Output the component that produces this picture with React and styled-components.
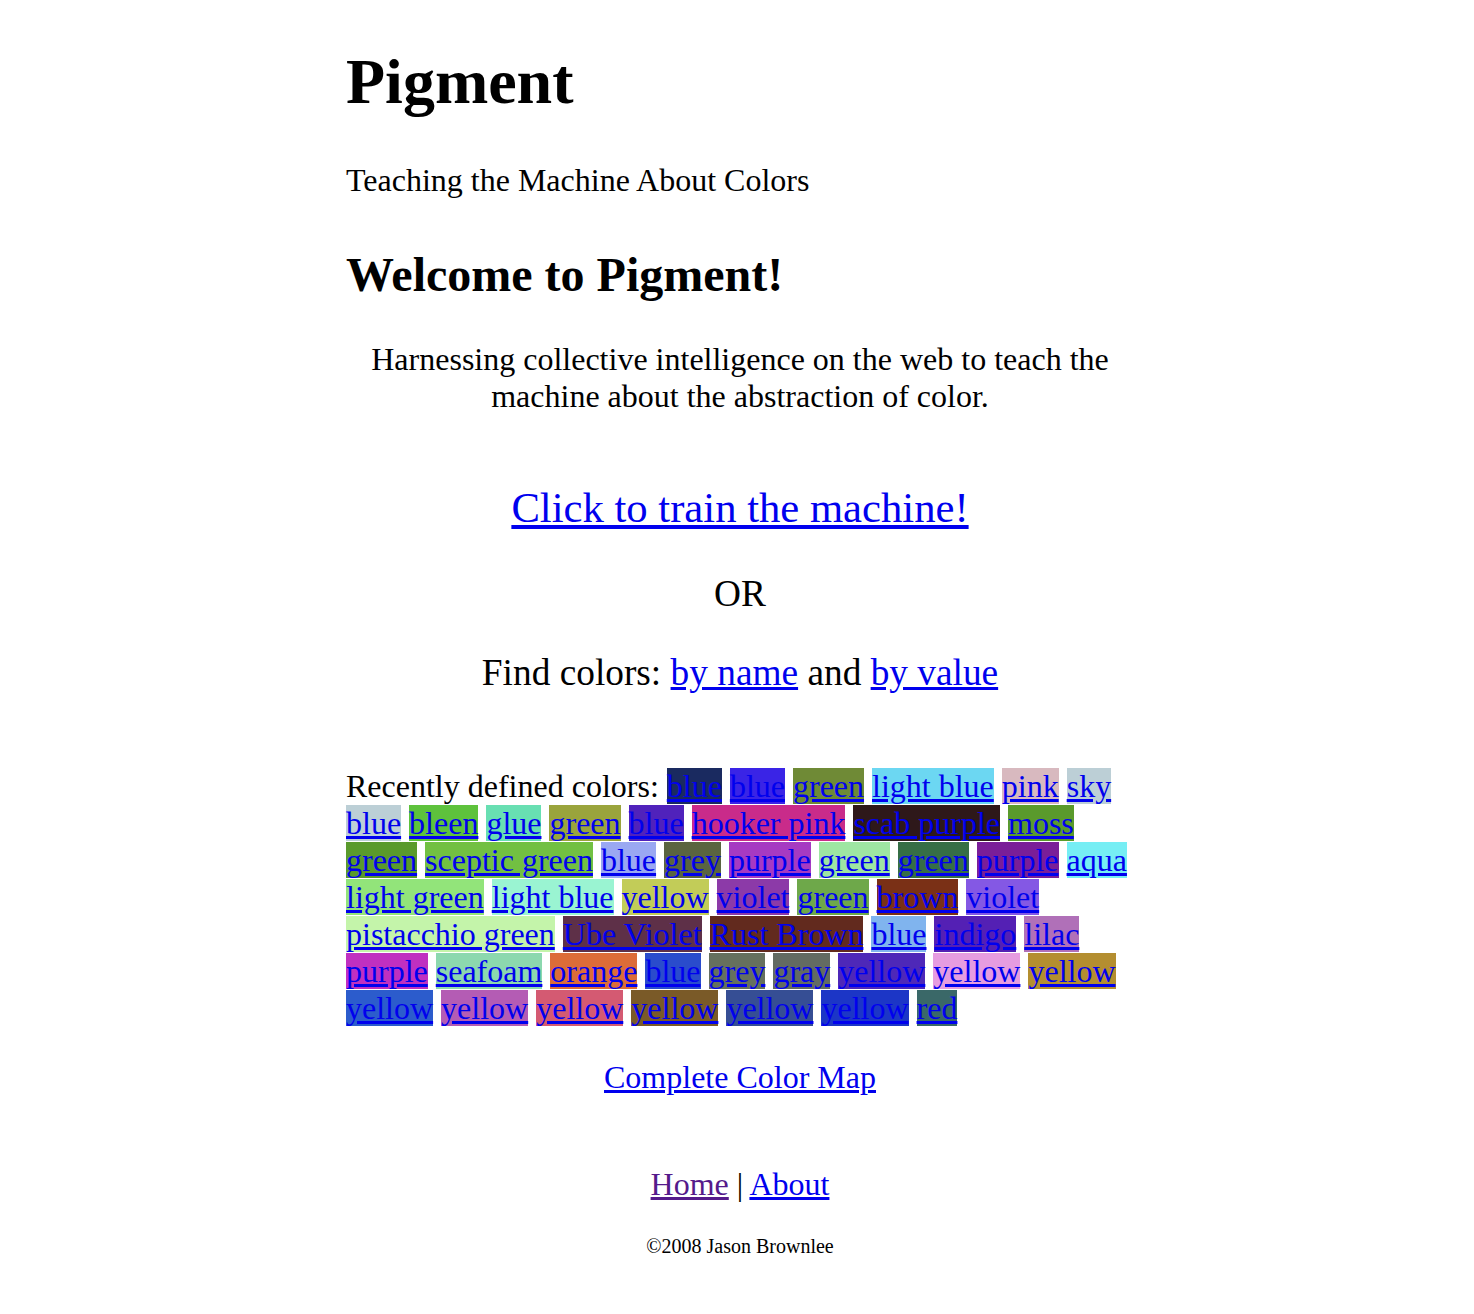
import React, { Fragment } from "react";
import styled, { createGlobalStyle } from "styled-components";

const GlobalStyle = createGlobalStyle`
  html, body {
    margin: 0;
    padding: 0;
    background: #ffffff;
  }
  body {
    font-family: "Liberation Serif", "Times New Roman", Times, serif;
    color: #000000;
  }
`;

const Page = styled.div`
  width: 788px;
  margin: 0 auto;
  padding-left: 6px;
  display: flex;
  flex-direction: column;
  font-size: 32px;
  line-height: normal;
`;

const Title = styled.h1`
  margin: 44.6px 0 0;
  font-size: 64px;
  font-weight: bold;
  line-height: normal;
`;

const Tagline = styled.p`
  margin: 43.7px 0 0;
  font-size: 32px;
`;

const Welcome = styled.h2`
  margin: 47.6px 0 0;
  font-size: 48px;
  font-weight: bold;
  line-height: normal;
`;

const Centered = styled.p`
  margin: ${(p) => p.$top}px 0 0;
  font-size: ${(p) => p.$size || 32}px;
  text-align: center;
`;

const Link = styled.a`
  color: ${(p) => (p.$visited ? "#551a8b" : "#0000ee")};
  text-decoration: underline;
  cursor: pointer;
`;

const Recent = styled.div`
  margin: 73.9px 0 0;
  font-size: 32px;
  text-align: left;
`;

const Chip = styled.a`
  color: #0000ee;
  text-decoration: underline;
  background: ${(p) => p.$bg};
  cursor: pointer;
`;

const Copyright = styled.p`
  margin: 31.9px 0 0;
  font-size: 20px;
  text-align: center;
`;

const chips = [
  ["blue", "#1a2a60"],
  ["blue", "#3a24e6"],
  ["green", "#6f8a36"],
  ["light blue", "#6cd7f2"],
  ["pink", "#d8b9bf"],
  ["sky blue", "#bccfd6"],
  ["bleen", "#5ec23c"],
  ["glue", "#68dfb2"],
  ["green", "#9aa43c"],
  ["blue", "#5022bb"],
  ["hooker pink", "#c92b8a"],
  ["scab purple", "#2e181a"],
  ["moss green", "#5a9a2c"],
  ["sceptic green", "#72c042"],
  ["blue", "#9aa8f2"],
  ["grey", "#5a6440"],
  ["purple", "#a63ac2"],
  ["green", "#9ee6a2"],
  ["green", "#366e46"],
  ["purple", "#7a1e98"],
  ["aqua", "#76eef4"],
  ["light green", "#92e47a"],
  ["light blue", "#9af4d2"],
  ["yellow", "#c2cc58"],
  ["violet", "#8c3aa8"],
  ["green", "#6ea84a"],
  ["brown", "#7a3016"],
  ["violet", "#8458e4"],
  ["pistacchio green", "#c4f4aa"],
  ["Ube Violet", "#5e3048"],
  ["Rust Brown", "#622a1e"],
  ["blue", "#80b4ee"],
  ["indigo", "#5420b4"],
  ["lilac", "#b070b8"],
  ["purple", "#c030c0"],
  ["seafoam", "#8cd8ae"],
  ["orange", "#dc6c38"],
  ["blue", "#2a4ccc"],
  ["grey", "#66705e"],
  ["gray", "#636b62"],
  ["yellow", "#4e28b8"],
  ["yellow", "#e69ce0"],
  ["yellow", "#b48e30"],
  ["yellow", "#2c5ccc"],
  ["yellow", "#b45cb4"],
  ["yellow", "#d45a72"],
  ["yellow", "#7a5a28"],
  ["yellow", "#364e94"],
  ["yellow", "#1c36c6"],
  ["red", "#3a6868"],
];

export default function App() {
  return (
    <>
      <GlobalStyle />
      <Page>
        <Title>Pigment</Title>
        <Tagline>Teaching the Machine About Colors</Tagline>
        <Welcome>Welcome to Pigment!</Welcome>
        <Centered $top={39.4}>
          Harnessing collective intelligence on the web to teach the machine
          about the abstraction of color.
        </Centered>
        <Centered $top={67.7} $size={42.67}>
          <Link>Click to train the machine!</Link>
        </Centered>
        <Centered $top={39.9} $size={37.33}>
          OR
        </Centered>
        <Centered $top={36.1} $size={37.33}>
          Find colors: <Link>by name</Link> and <Link>by value</Link>
        </Centered>
        <Recent>
          Recently defined colors:
          {chips.map(([name, bg], i) => (
            <Fragment key={i}>
              {" "}
              <Chip $bg={bg}>{name}</Chip>
            </Fragment>
          ))}
        </Recent>
        <Centered $top={32.4}>
          <Link>Complete Color Map</Link>
        </Centered>
        <Centered $top={70.2}>
          <Link $visited>Home</Link> | <Link>About</Link>
        </Centered>
        <Copyright>©2008 Jason Brownlee</Copyright>
      </Page>
    </>
  );
}
